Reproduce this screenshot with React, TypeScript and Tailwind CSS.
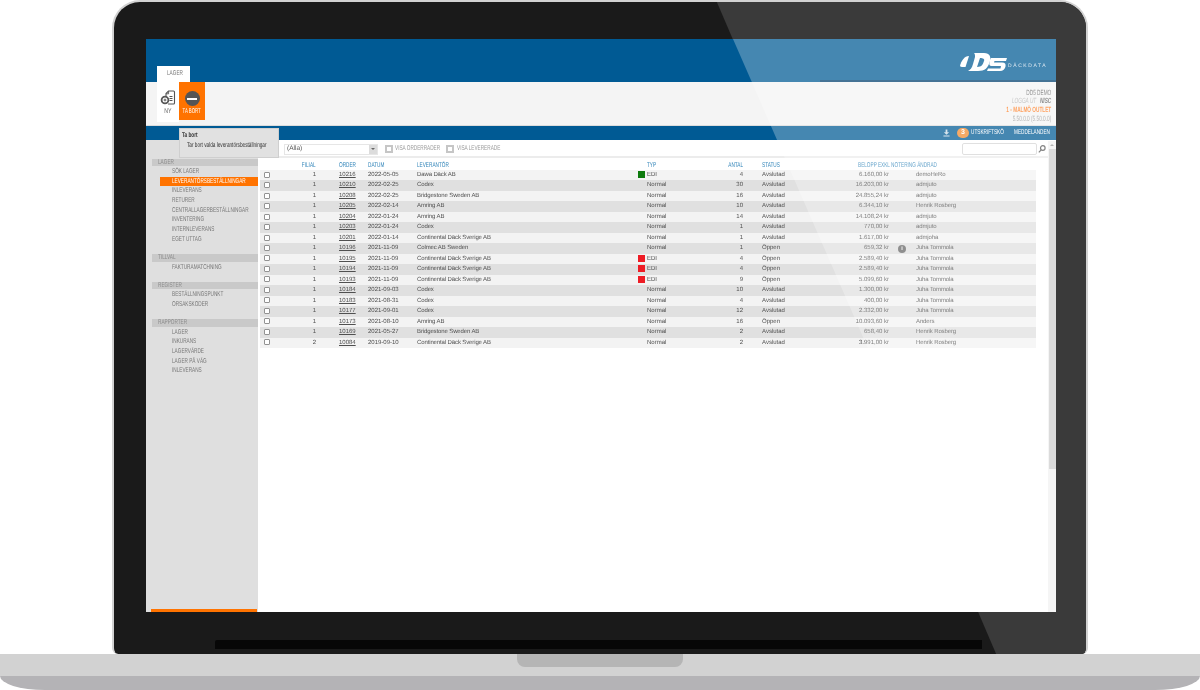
import type { ReactNode } from "react";

const rows: string[][] = [
["1","10216","2022-05-05","Dawa Däck AB","g","EDI","4","Avslutad","6.160,00 kr","","demoHeRo"],
["1","10210","2022-02-25","Codex","","Normal","30","Avslutad","16.203,00 kr","","admjuto"],
["1","10208","2022-02-25","Bridgestone Sweden AB","","Normal","16","Avslutad","24.855,24 kr","","admjuto"],
["1","10205","2022-02-14","Amring AB","","Normal","10","Avslutad","6.344,10 kr","","Henrik Rosberg"],
["1","10204","2022-01-24","Amring AB","","Normal","14","Avslutad","14.108,24 kr","","admjuto"],
["1","10203","2022-01-24","Codex","","Normal","1","Avslutad","770,00 kr","","admjuto"],
["1","10201","2022-01-14","Continental Däck Sverige AB","","Normal","1","Avslutad","1.617,00 kr","","admjoha"],
["1","10196","2021-11-09","Colmec AB Sweden","","Normal","1","Öppen","659,32 kr","i","Juha Tommola"],
["1","10195","2021-11-09","Continental Däck Sverige AB","r","EDI","4","Öppen","2.589,40 kr","","Juha Tommola"],
["1","10194","2021-11-09","Continental Däck Sverige AB","r","EDI","4","Öppen","2.589,40 kr","","Juha Tommola"],
["1","10193","2021-11-09","Continental Däck Sverige AB","r","EDI","9","Öppen","5.099,60 kr","","Juha Tommola"],
["1","10184","2021-09-03","Codex","","Normal","10","Avslutad","1.300,00 kr","","Juha Tommola"],
["1","10183","2021-08-31","Codex","","Normal","4","Avslutad","400,00 kr","","Juha Tommola"],
["1","10177","2021-09-01","Codex","","Normal","12","Avslutad","2.332,00 kr","","Juha Tommola"],
["1","10173","2021-08-10","Amring AB","","Normal","16","Öppen","10.093,60 kr","","Anders"],
["1","10169","2021-05-27","Bridgestone Sweden AB","","Normal","2","Avslutad","658,40 kr","","Henrik Rosberg"],
["2","10084","2019-09-10","Continental Däck Sverige AB","","Normal","2","Avslutad","3.991,00 kr","","Henrik Rosberg"],
];

const groups: { title: string; items: string[] }[] = [
  { title: "LAGER", items: ["SÖK LAGER","LEVERANTÖRSBESTÄLLNINGAR","INLEVERANS","RETURER","CENTRALLAGERBESTÄLLNINGAR","INVENTERING","INTERNLEVERANS","EGET UTTAG"] },
  { title: "TILLVAL", items: ["FAKTURAMATCHNING"] },
  { title: "REGISTER", items: ["BESTÄLLNINGSPUNKT","ORSAKSKODER"] },
  { title: "RAPPORTER", items: ["LAGER","INKURANS","LAGERVÄRDE","LAGER PÅ VÄG","INLEVERANS"] },
];

const cols = "grid grid-cols-[40px_16px_52px_49px_221px_9px_53px_43px_87px_59px_27px_120px] items-center";

/* condensed label: the app's caps font is a narrow grotesque */
function C({ children }: { children: ReactNode }) {
  return <span className="inline-block whitespace-nowrap origin-left scale-x-[.67]">{children}</span>;
}
function R({ children }: { children: ReactNode }) {
  return (
    <span className="flex justify-end">
      <span className="shrink-0 whitespace-nowrap origin-right scale-x-[.67]">{children}</span>
    </span>
  );
}
function Box() {
  return <span className="block w-[6px] h-[6px] -translate-y-[1px] border border-[#929292] bg-white rounded-[1px]" />;
}
function BigBox() {
  return <span className="block w-[8px] h-[8px] border-2 border-[#c6c6c6] bg-white" />;
}

export default function App() {
  return (
    <div className="w-[1200px] h-[690px] bg-white overflow-hidden font-['Liberation_Sans',sans-serif] [text-rendering:geometricPrecision]">
      <div className="relative mx-[112px] h-[654px] w-[976px] bg-[#1a1a1a] rounded-t-[28px] rounded-b-[6px] border-x-2 border-t-2 border-[#d2d2d2] pt-[37px] px-[32px] overflow-hidden">
        {/* bezel reflection */}
        <div className="absolute inset-0 bg-[#3a3a3a] [clip-path:polygon(602px_-2px,976px_-2px,976px_654px,883px_654px)]" />
        {/* speaker strip */}
        <div className="absolute left-[101px] top-[638px] w-[767px] h-[9px] bg-[#070707] rounded-tl-[2px]" />

        <div className="relative w-[910px] h-[573px] flex flex-col bg-white overflow-hidden blur-[0.3px]">
          {/* blue header */}
          <div className="relative h-[43px] shrink-0 bg-[#005a94] flex items-end pl-[11px]">
            <div className="w-[33px] h-[16px] bg-white flex items-center pl-[10px] text-[7px] text-[#777]"><C>LAGER</C></div>
            <div className="absolute right-0 bottom-0 w-[236px] h-[2px] bg-[#003f6e]" />
          </div>

          {/* toolbar */}
          <div className="h-[44px] shrink-0 bg-[#f4f4f4] flex items-start pl-[11px] pr-[5px] border-b border-[#dcdcdc]">
            <div className="w-[22px] h-[40px] bg-white flex flex-col items-center pt-[8px]">
              <svg width="16" height="16" viewBox="0 0 16 16" fill="none" stroke="#555" strokeWidth="1.1">
                <path d="M6 6V3.5L8.5 1H13.5A1 1 0 0 1 14.5 2V13A1 1 0 0 1 13.5 14H8" />
                <path d="M6 3.8H8.6V1.2" strokeWidth=".9" />
                <path d="M9.5 6.5h3M9.5 8.5h3M9.5 10.5h3" strokeWidth="1" />
                <circle cx="5" cy="10" r="3.4" strokeWidth="1.8" fill="#fff" />
                <path d="M5 8.6v2.8M3.6 10h2.8" strokeWidth="1" />
              </svg>
              <span className="mt-[2px] text-[7px] leading-[8px] text-[#666] scale-x-[.75]">NY</span>
            </div>
            <div className="w-[26px] h-[38px] bg-[#ff7300] flex flex-col items-center pt-[9px]">
              <span className="w-[15px] h-[15px] rounded-full bg-[#555] flex items-center justify-center">
                <span className="w-[10px] h-[2px] bg-white" />
              </span>
              <span className="mt-[2px] text-[7px] leading-[8px] text-white whitespace-nowrap scale-x-[.62]">TA BORT</span>
            </div>
            <div className="ml-auto pt-[6.5px] flex flex-col items-end text-[7.5px] leading-[8.8px] origin-right scale-x-[.63]">
              <span className="text-[#666]">DD5 DEMO</span>
              <span className="flex gap-[6px]"><i className="text-[#b5b5b5]">LOGGA UT</i><i className="font-bold text-[#666]">NISC</i></span>
              <span className="text-[#ff7f26] font-bold">1 - MALMÖ OUTLET</span>
              <span className="text-[#999]">5.50.0.0 (5.50.0.0)</span>
            </div>
          </div>

          {/* blue bar */}
          <div className="h-[14px] shrink-0 bg-[#005a94] flex items-center pl-[797px] text-[7px] text-white">
            <svg width="7" height="8" viewBox="0 0 8 8" fill="#c9dbe7" className="mr-[7px] shrink-0">
              <path d="M3 0h2v3h2L4 6 1 3h2zM0.5 6.8h7V8h-7z" />
            </svg>
            <span className="w-[12px] h-[10px] rounded-full bg-[#f28a2e] flex items-center justify-center font-bold mr-[2px] shrink-0">3</span>
            <span className="w-[43px] shrink-0"><C>UTSKRIFTSKÖ</C></span>
            <span className="shrink-0"><C>MEDDELANDEN</C></span>
          </div>

          {/* body */}
          <div className="flex-1 flex min-h-0">
            <aside className="w-[112px] shrink-0 bg-[#dfdfdf] flex flex-col pt-[18.5px]">
              {groups.map((g) => (
                <div key={g.title} className="mb-[9.5px]">
                  <div className="h-[7.7px] ml-[6px] bg-[#c9c9c9] pl-[5.5px] text-[7px] leading-[7.7px] text-[#8a8a8a]"><C>{g.title}</C></div>
                  <div className="pt-[1px]">
                    {g.items.map((it, i) => {
                      const active = it === "LEVERANTÖRSBESTÄLLNINGAR";
                      return (
                        <div key={i} className={`h-[9.65px] ml-[14px] pl-[12px] text-[7px] leading-[9.65px] ${active ? "bg-[#ff7300] text-white" : "text-[#777]"}`}><C>{it}</C></div>
                      );
                    })}
                  </div>
                </div>
              ))}
              <div className="mt-auto ml-[5px] mr-[1px] h-[3.5px] bg-[#ff7300]" />
            </aside>

            <main className="flex-1 min-w-0 flex flex-col relative">
              {/* filter row */}
              <div className="h-[18px] shrink-0 flex items-center pt-[2px] pl-[26px] border-b-2 border-[#ececec]">
                <div className="w-[94px] h-[11px] bg-white border border-[#e6e6e6] flex items-center justify-between text-[6.5px] text-[#555]">
                  <span className="pl-[2px]">(Alla)</span>
                  <span className="w-[8px] h-full bg-[#dcdcdc] flex items-center justify-center">
                    <span className="block border-x-[2px] border-t-[2px] border-x-transparent border-t-[#666]" />
                  </span>
                </div>
                <span className="ml-[7px] mr-[2px]"><BigBox /></span>
                <span className="w-[51px] shrink-0 text-[7px] text-[#999]"><C>VISA ORDERRADER</C></span>
                <span className="mr-[3px]"><BigBox /></span>
                <span className="shrink-0 text-[7px] text-[#999]"><C>VISA LEVERERADE</C></span>
                <div className="ml-auto w-[75px] h-[12px] bg-white border border-[#d5d5d5] rounded-[2px]" />
                <svg width="8" height="8" viewBox="0 0 8 8" fill="none" stroke="#555" strokeWidth="1.2" className="ml-[1px] mr-[10px] shrink-0">
                  <circle cx="4.8" cy="3" r="2.3" /><path d="M3.2 4.8L0.8 7.4" />
                </svg>
              </div>

              {/* table */}
              <div className="ml-[2px] w-[776px]">
                <div className={`${cols} h-[12px] pt-[3px] text-[7px] text-[#2f83b8]`}>
                  <span />
                  <R>FILIAL</R>
                  <span className="pl-[23px]"><C>ORDER</C></span>
                  <span><C>DATUM</C></span>
                  <span><C>LEVERANTÖR</C></span>
                  <span />
                  <span><C>TYP</C></span>
                  <R>ANTAL</R>
                  <span className="pl-[19px]"><C>STATUS</C></span>
                  <span className="col-span-3 pl-[28px]"><C>BELOPP EXKL NOTERING ÄNDRAD</C></span>
                </div>
                {rows.map((r, i) => (
                  <div key={i} className={`${cols} h-[10.47px] pt-[1px] text-[6px] leading-[9.47px] text-[#505050] whitespace-nowrap ${i % 2 ? "bg-[#e0e0e0]" : "bg-[#f3f3f3]"}`}>
                    <span className="pl-[4px]"><Box /></span>
                    <span className="text-right">{r[0]}</span>
                    <span className="pl-[23px] underline">{r[1]}</span>
                    <span>{r[2]}</span>
                    <span className="tracking-[-0.12px]">{r[3]}</span>
                    <span className="flex -translate-y-[1px]">
                      {r[4] && <span className={`block w-[7px] h-[7px] ${r[4] === "g" ? "bg-[#0d7a0d]" : "bg-[#ee1c25]"}`} />}
                    </span>
                    <span>{r[5]}</span>
                    <span className="text-right">{r[6]}</span>
                    <span className="pl-[19px]">{r[7]}</span>
                    <span className="text-right">{r[8]}</span>
                    <span className="pl-[9px] flex">
                      {r[9] && <span className="w-[8px] h-[8px] rounded-full bg-[#666] text-white text-[5.5px] leading-[8px] text-center font-bold">i</span>}
                    </span>
                    <span className="tracking-[-0.12px]">{r[10]}</span>
                  </div>
                ))}
              </div>

              {/* scrollbar */}
              <div className="absolute right-0 top-[1px] bottom-0 w-[8px] bg-[#f1f1f1] flex flex-col items-center">
                <span className="mt-[3px] block border-x-[2px] border-b-[2px] border-x-transparent border-b-[#999]" />
                <span className="mt-[3px] w-[7px] h-[320px] bg-[#cdcdcd]" />
              </div>
            </main>
          </div>

          {/* tooltip */}
          <div className="absolute left-[33px] top-[89px] w-[100px] h-[30px] bg-[#e1e1e1] border border-[#cfcfcf] pl-[2px] pt-[2px] text-[7px] text-[#333]">
            <div className="font-bold leading-[9px]"><C>Ta bort</C></div>
            <div className="pl-[5px] pt-[1px] leading-[9px]"><C>Tar bort valda leverantörsbeställningar</C></div>
          </div>

          {/* logo */}
          <div className="absolute left-[814px] top-[14px] flex items-center">
            <svg width="47" height="19" viewBox="0 0 47 19" fill="#fff">
              <path d="M9 3L5.5 14C3 14 0 14 0 13C1 8 4.5 3 9 3Z" />
              <path fillRule="evenodd" d="M14 0H24C30 0 31 4 30 8C28 15 25 18 18 18H8C10 17 12 15 13 11L15 4C15 2 15 1 14 0ZM20 5L17 14C22 14 23 11 24 8C25 6 23 5 20 5Z" />
              <path d="M31 5H47L46 8H34.5L34 9.5H42C45 9.5 46 11 45.5 13.5C45 16 43 18 40 18H27L28 15.5H40.5L41 13H31.5C29.5 13 29 11.5 29.5 9.5C30 7.5 30 6 31 5Z" />
            </svg>
            <span className="ml-[1px] mt-[9px] text-[5px] tracking-[1.6px] text-[#d6e5ef]">DÄCKDATA</span>
          </div>

          {/* screen reflection */}
          <div className="absolute inset-0 bg-white/27 pointer-events-none [clip-path:polygon(587px_0,910px_0,910px_573px,837px_573px)]" />
        </div>
      </div>

      {/* base */}
      <div className="relative h-[36px] flex flex-col overflow-hidden rounded-b-[45px_14px] bg-[#b4b3b6]">
        <div className="h-[22px] bg-[#d2d2d2]" />
        <div className="absolute left-[517px] top-0 w-[166px] h-[13px] bg-[#b5b5b5] rounded-b-[8px]" />
      </div>
    </div>
  );
}
